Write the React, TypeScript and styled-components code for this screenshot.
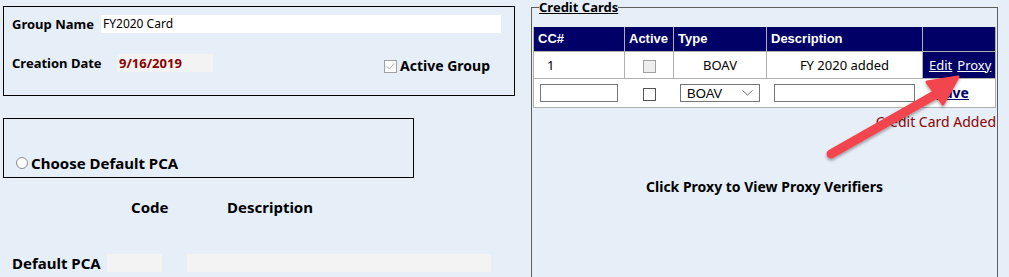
import styled, { createGlobalStyle } from 'styled-components';

const GlobalStyle = createGlobalStyle`
  html, body {
    margin: 0;
    padding: 0;
    overflow: hidden;
    background-color: #e6eef8;
  }
  body {
    font-family: "Noto Sans", "DejaVu Sans", sans-serif;
    color: #000;
  }
`;

const Page = styled.div`
  position: relative;
  display: flex;
  align-items: flex-start;
  width: 1009px;
  height: 277px;
  overflow: hidden;
`;

const LeftColumn = styled.div`
  display: flex;
  flex-direction: column;
  width: 528px;
  padding-left: 3px;
  box-sizing: border-box;
`;

const GroupBox = styled.div`
  margin-top: 6px;
  width: 512px;
  height: 90px;
  border: 1px solid #000;
  box-sizing: border-box;
  padding: 8px 0 0 8px;
  display: flex;
  flex-direction: column;
  gap: 18px;
`;

const Row = styled.div`
  display: flex;
  align-items: center;
`;

const Label = styled.span<{ $size?: number; $width?: number }>`
  font-weight: 700;
  font-size: ${p => p.$size ?? 13}px;
  line-height: 18px;
  ${p => (p.$width ? `width: ${p.$width}px;` : '')}
  white-space: nowrap;
`;

const TextField = styled.div<{ $width: number; $bg?: string; $gap?: number }>`
  width: ${p => p.$width}px;
  height: 18px;
  margin-left: ${p => p.$gap ?? 0}px;
  background-color: ${p => p.$bg ?? '#fff'};
  font-size: 12px;
  line-height: 18px;
  padding-left: 2px;
  box-sizing: border-box;
`;

const DateValue = styled.div`
  width: 96px;
  height: 18px;
  background-color: #f3f3f3;
  color: #8b0000;
  font-weight: 700;
  font-size: 13px;
  line-height: 18px;
  padding-left: 2px;
  box-sizing: border-box;
`;

const CheckLabel = styled.label`
  display: flex;
  align-items: center;
  gap: 3px;
  margin-left: auto;
  margin-right: 24px;
  margin-top: 6px;
`;

const Check = styled.span<{ $checked?: boolean; $disabled?: boolean }>`
  display: inline-flex;
  align-items: center;
  justify-content: center;
  vertical-align: middle;
  width: 13px;
  height: 13px;
  box-sizing: border-box;
  border: 1px solid ${p => (p.$disabled ? '#a0a0a0' : '#555')};
  background-color: ${p => (p.$disabled && !p.$checked ? '#eeeeee' : '#fff')};
`;

const PcaBox = styled.div`
  margin-top: 22px;
  width: 411px;
  height: 60px;
  border: 1px solid #000;
  box-sizing: border-box;
  padding: 30px 0 0 12px;
  display: flex;
  align-items: center;
  gap: 3px;
`;

const Radio = styled.span`
  width: 12px;
  height: 12px;
  border-radius: 50%;
  border: 1px solid #8a8a8a;
  background-color: #fff;
  box-sizing: border-box;
`;

const ColumnHeads = styled.div`
  display: grid;
  grid-template-columns: 96px auto;
  margin-top: 20px;
  padding-left: 128px;
`;

const PcaRow = styled.div`
  display: flex;
  align-items: center;
  margin-top: 38px;
  padding-left: 9px;
`;

const Fieldset = styled.fieldset`
  margin: 0 0 0 3px;
  padding: 13px 1px 0 1px;
  width: 467px;
  height: 320px;
  box-sizing: border-box;
  border: 1px solid #5e5e5e;
  display: flex;
  flex-direction: column;
  min-width: 0;
`;

const Legend = styled.legend`
  margin-left: 6px;
  padding: 0;
  font-weight: 700;
  font-size: 13px;
  line-height: 14px;
  text-decoration: underline;
`;

const Table = styled.table`
  width: 462px;
  border-collapse: collapse;
  table-layout: fixed;
  font-size: 13px;
`;

const HeadCell = styled.th<{ $width: number }>`
  width: ${p => p.$width}px;
  height: 24px;
  background-color: #000066;
  color: #fff;
  font-family: "Liberation Sans", Arial, sans-serif;
  font-weight: 700;
  font-size: 13px;
  text-align: left;
  padding: 0 4px;
  border: 1px solid #b0b0b0;
  border-top: none;
  box-sizing: border-box;
`;

const Cell = styled.td<{ $align?: string; $dark?: boolean; $indent?: number }>`
  height: 26px;
  padding: 0 4px 0 ${p => p.$indent ?? 4}px;
  text-align: ${p => p.$align ?? 'center'};
  background-color: ${p => (p.$dark ? '#000066' : '#fff')};
  border: 1px solid #b0b0b0;
  white-space: nowrap;
`;

const EntryCell = styled.td<{ $align?: string; $indent?: number }>`
  height: 28px;
  padding: 0 0 0 ${p => p.$indent ?? 0}px;
  text-align: ${p => p.$align ?? 'center'};
  background-color: #fff;
  border-bottom: 1px solid #b0b0b0;
  white-space: nowrap;
`;

const EntryRow = styled.tr`
  border-left: 1px solid #b0b0b0;
  border-right: 1px solid #b0b0b0;
`;

const LinkText = styled.span<{ $light?: boolean }>`
  color: ${p => (p.$light ? '#fff' : '#000066')};
  text-decoration: underline;
  font-size: ${p => (p.$light ? 13 : 14)}px;
  font-weight: ${p => (p.$light ? 400 : 700)};
  margin-right: 5px;
`;

const Input = styled.span<{ $width: number }>`
  display: inline-block;
  vertical-align: middle;
  width: ${p => p.$width}px;
  height: 18px;
  border: 1px solid #767676;
  background-color: #fff;
  box-sizing: border-box;
`;

const Select = styled.span`
  display: inline-flex;
  align-items: center;
  justify-content: space-between;
  vertical-align: middle;
  width: 80px;
  height: 18px;
  border: 1px solid #767676;
  background-color: #fff;
  box-sizing: border-box;
  padding: 0 6px;
  font-family: "Liberation Sans", Arial, sans-serif;
  font-size: 13px;
`;

const Notice = styled.div`
  align-self: flex-end;
  margin-top: 4px;
  color: #8b0000;
  font-size: 14px;
  line-height: 20px;
`;

const Hint = styled.div`
  margin-top: 45px;
  text-align: center;
  font-weight: 700;
  font-size: 14px;
`;

const Arrow = styled.svg`
  position: absolute;
  left: 0;
  top: 0;
  pointer-events: none;
`;

function CheckMark({ color }: { color: string }) {
  return (
    <svg width="9" height="9" viewBox="0 0 9 9">
      <path d="M1 4.5 L3.5 7 L8 1.5" fill="none" stroke={color} strokeWidth="1" />
    </svg>
  );
}

export default function App() {
  return (
    <>
      <GlobalStyle />
      <Page>
        <LeftColumn>
          <GroupBox>
            <Row>
              <Label $width={89}>Group Name</Label>
              <TextField $width={400}>FY2020 Card</TextField>
            </Row>
            <Row>
              <Label $width={105}>Creation Date</Label>
              <DateValue>9/16/2019</DateValue>
              <CheckLabel>
                <Check $checked $disabled>
                  <CheckMark color="#a8a8a8" />
                </Check>
                <Label $size={14}>Active Group</Label>
              </CheckLabel>
            </Row>
          </GroupBox>

          <PcaBox>
            <Radio />
            <Label $size={15}>Choose Default PCA</Label>
          </PcaBox>

          <ColumnHeads>
            <Label $size={15}>Code</Label>
            <Label $size={15}>Description</Label>
          </ColumnHeads>

          <PcaRow>
            <Label $size={15} $width={95}>Default PCA</Label>
            <TextField $width={55} $bg="#f3f3f3" />
            <TextField $width={304} $bg="#f3f3f3" $gap={25} />
          </PcaRow>
        </LeftColumn>

        <Fieldset>
          <Legend>Credit Cards</Legend>
          <Table>
            <thead>
              <tr>
                <HeadCell $width={91}>CC#</HeadCell>
                <HeadCell $width={49}>Active</HeadCell>
                <HeadCell $width={93}>Type</HeadCell>
                <HeadCell $width={156}>Description</HeadCell>
                <HeadCell $width={73}></HeadCell>
              </tr>
            </thead>
            <tbody>
              <tr>
                <Cell $align="left" $indent={13}>1</Cell>
                <Cell>
                  <Check $disabled />
                </Cell>
                <Cell>BOAV</Cell>
                <Cell>FY 2020 added</Cell>
                <Cell $dark $align="left" $indent={6}>
                  <LinkText $light>Edit</LinkText>
                  <LinkText $light>Proxy</LinkText>
                </Cell>
              </tr>
              <EntryRow>
                <EntryCell>
                  <Input $width={78} />
                </EntryCell>
                <EntryCell>
                  <Check />
                </EntryCell>
                <EntryCell>
                  <Select>
                    BOAV
                    <svg width="11" height="6" viewBox="0 0 11 6">
                      <path d="M0.5 0.5 L5.5 5 L10.5 0.5" fill="none" stroke="#6e6e6e" strokeWidth="1" />
                    </svg>
                  </Select>
                </EntryCell>
                <EntryCell>
                  <Input $width={141} />
                </EntryCell>
                <EntryCell $align="left" $indent={14}>
                  <LinkText>Save</LinkText>
                </EntryCell>
              </EntryRow>
            </tbody>
          </Table>
          <Notice>Credit Card Added</Notice>
          <Hint>Click Proxy to View Proxy Verifiers</Hint>
        </Fieldset>

        <Arrow width="1009" height="277" viewBox="0 0 1009 277">
          <defs>
            <filter id="shadow" x="-10%" y="-10%" width="130%" height="130%">
              <feDropShadow dx="0" dy="2" stdDeviation="1.5" floodColor="#000" floodOpacity="0.35" />
            </filter>
          </defs>
          <g filter="url(#shadow)" fill="#f2454d" stroke="#f2454d">
            <line x1="831" y1="154" x2="940" y2="92" strokeWidth="9" strokeLinecap="round" />
            <path d="M958 77 L927 82 L943 104 Z" strokeWidth="3" strokeLinejoin="round" />
          </g>
        </Arrow>
      </Page>
    </>
  );
}
